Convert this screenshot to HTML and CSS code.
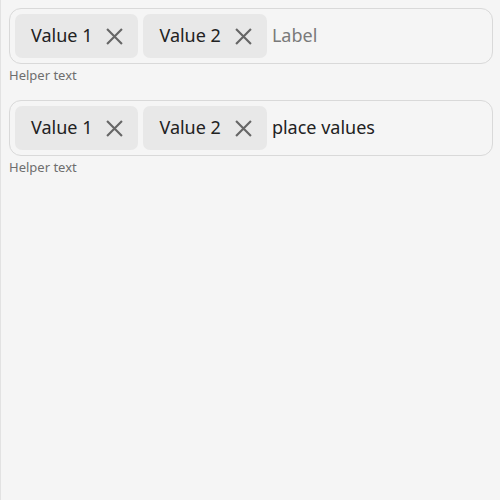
FILE: index.html
```html
<!DOCTYPE html>
<html>
<head>
<meta charset="utf-8">
<link rel="stylesheet" href="styles.css">
</head>
<body>
<div class="page">
  <div class="group">
    <div class="field">
      <div class="chip"><span class="chip-text">Value 1</span><svg class="x" viewBox="0 0 16 16"><path d="M1 1L15 15M15 1L1 15"/></svg></div>
      <div class="chip"><span class="chip-text">Value 2</span><svg class="x" viewBox="0 0 16 16"><path d="M1 1L15 15M15 1L1 15"/></svg></div>
      <span class="input placeholder">Label</span>
    </div>
    <div class="helper">Helper text</div>
  </div>
  <div class="group">
    <div class="field">
      <div class="chip"><span class="chip-text">Value 1</span><svg class="x" viewBox="0 0 16 16"><path d="M1 1L15 15M15 1L1 15"/></svg></div>
      <div class="chip"><span class="chip-text">Value 2</span><svg class="x" viewBox="0 0 16 16"><path d="M1 1L15 15M15 1L1 15"/></svg></div>
      <span class="input">place values</span>
    </div>
    <div class="helper">Helper text</div>
  </div>
</div>
</body>
</html>
```
FILE: styles.css
```css
html, body {
  margin: 0;
  padding: 0;
  background: #f5f5f5;
}
body {
  font-family: "Noto Sans", "Open Sans", sans-serif;
}
.page {
  min-height: 500px;
  box-sizing: border-box;
  border-left: 1px solid #e2e2e2;
  padding: 8px 7px 8px 8px;
}
.group {
  margin-bottom: 17px;
}
.field {
  display: flex;
  align-items: center;
  gap: 5px;
  height: 56px;
  box-sizing: border-box;
  border: 1px solid #d9d9d9;
  border-radius: 12px;
  padding: 5px;
}
.chip {
  display: flex;
  align-items: center;
  height: 44px;
  box-sizing: border-box;
  padding: 0 15px 0 16px;
  background: #e8e8e8;
  border-radius: 7px;
  gap: 14px;
}
.chip-text {
  font-size: 18px;
  color: #222;
  line-height: 24px;
  padding-bottom: 2px;
}
.x {
  width: 17px;
  height: 17px;
  stroke: #666;
  stroke-width: 2;
  fill: none;
}
.input {
  font-size: 18px;
  line-height: 24px;
  color: #222;
  padding-bottom: 2px;
}
.placeholder {
  color: #7a7a7a;
}
.helper {
  margin-top: 3px;
  font-size: 13px;
  line-height: 16px;
  color: #6e6e6e;
}
```
